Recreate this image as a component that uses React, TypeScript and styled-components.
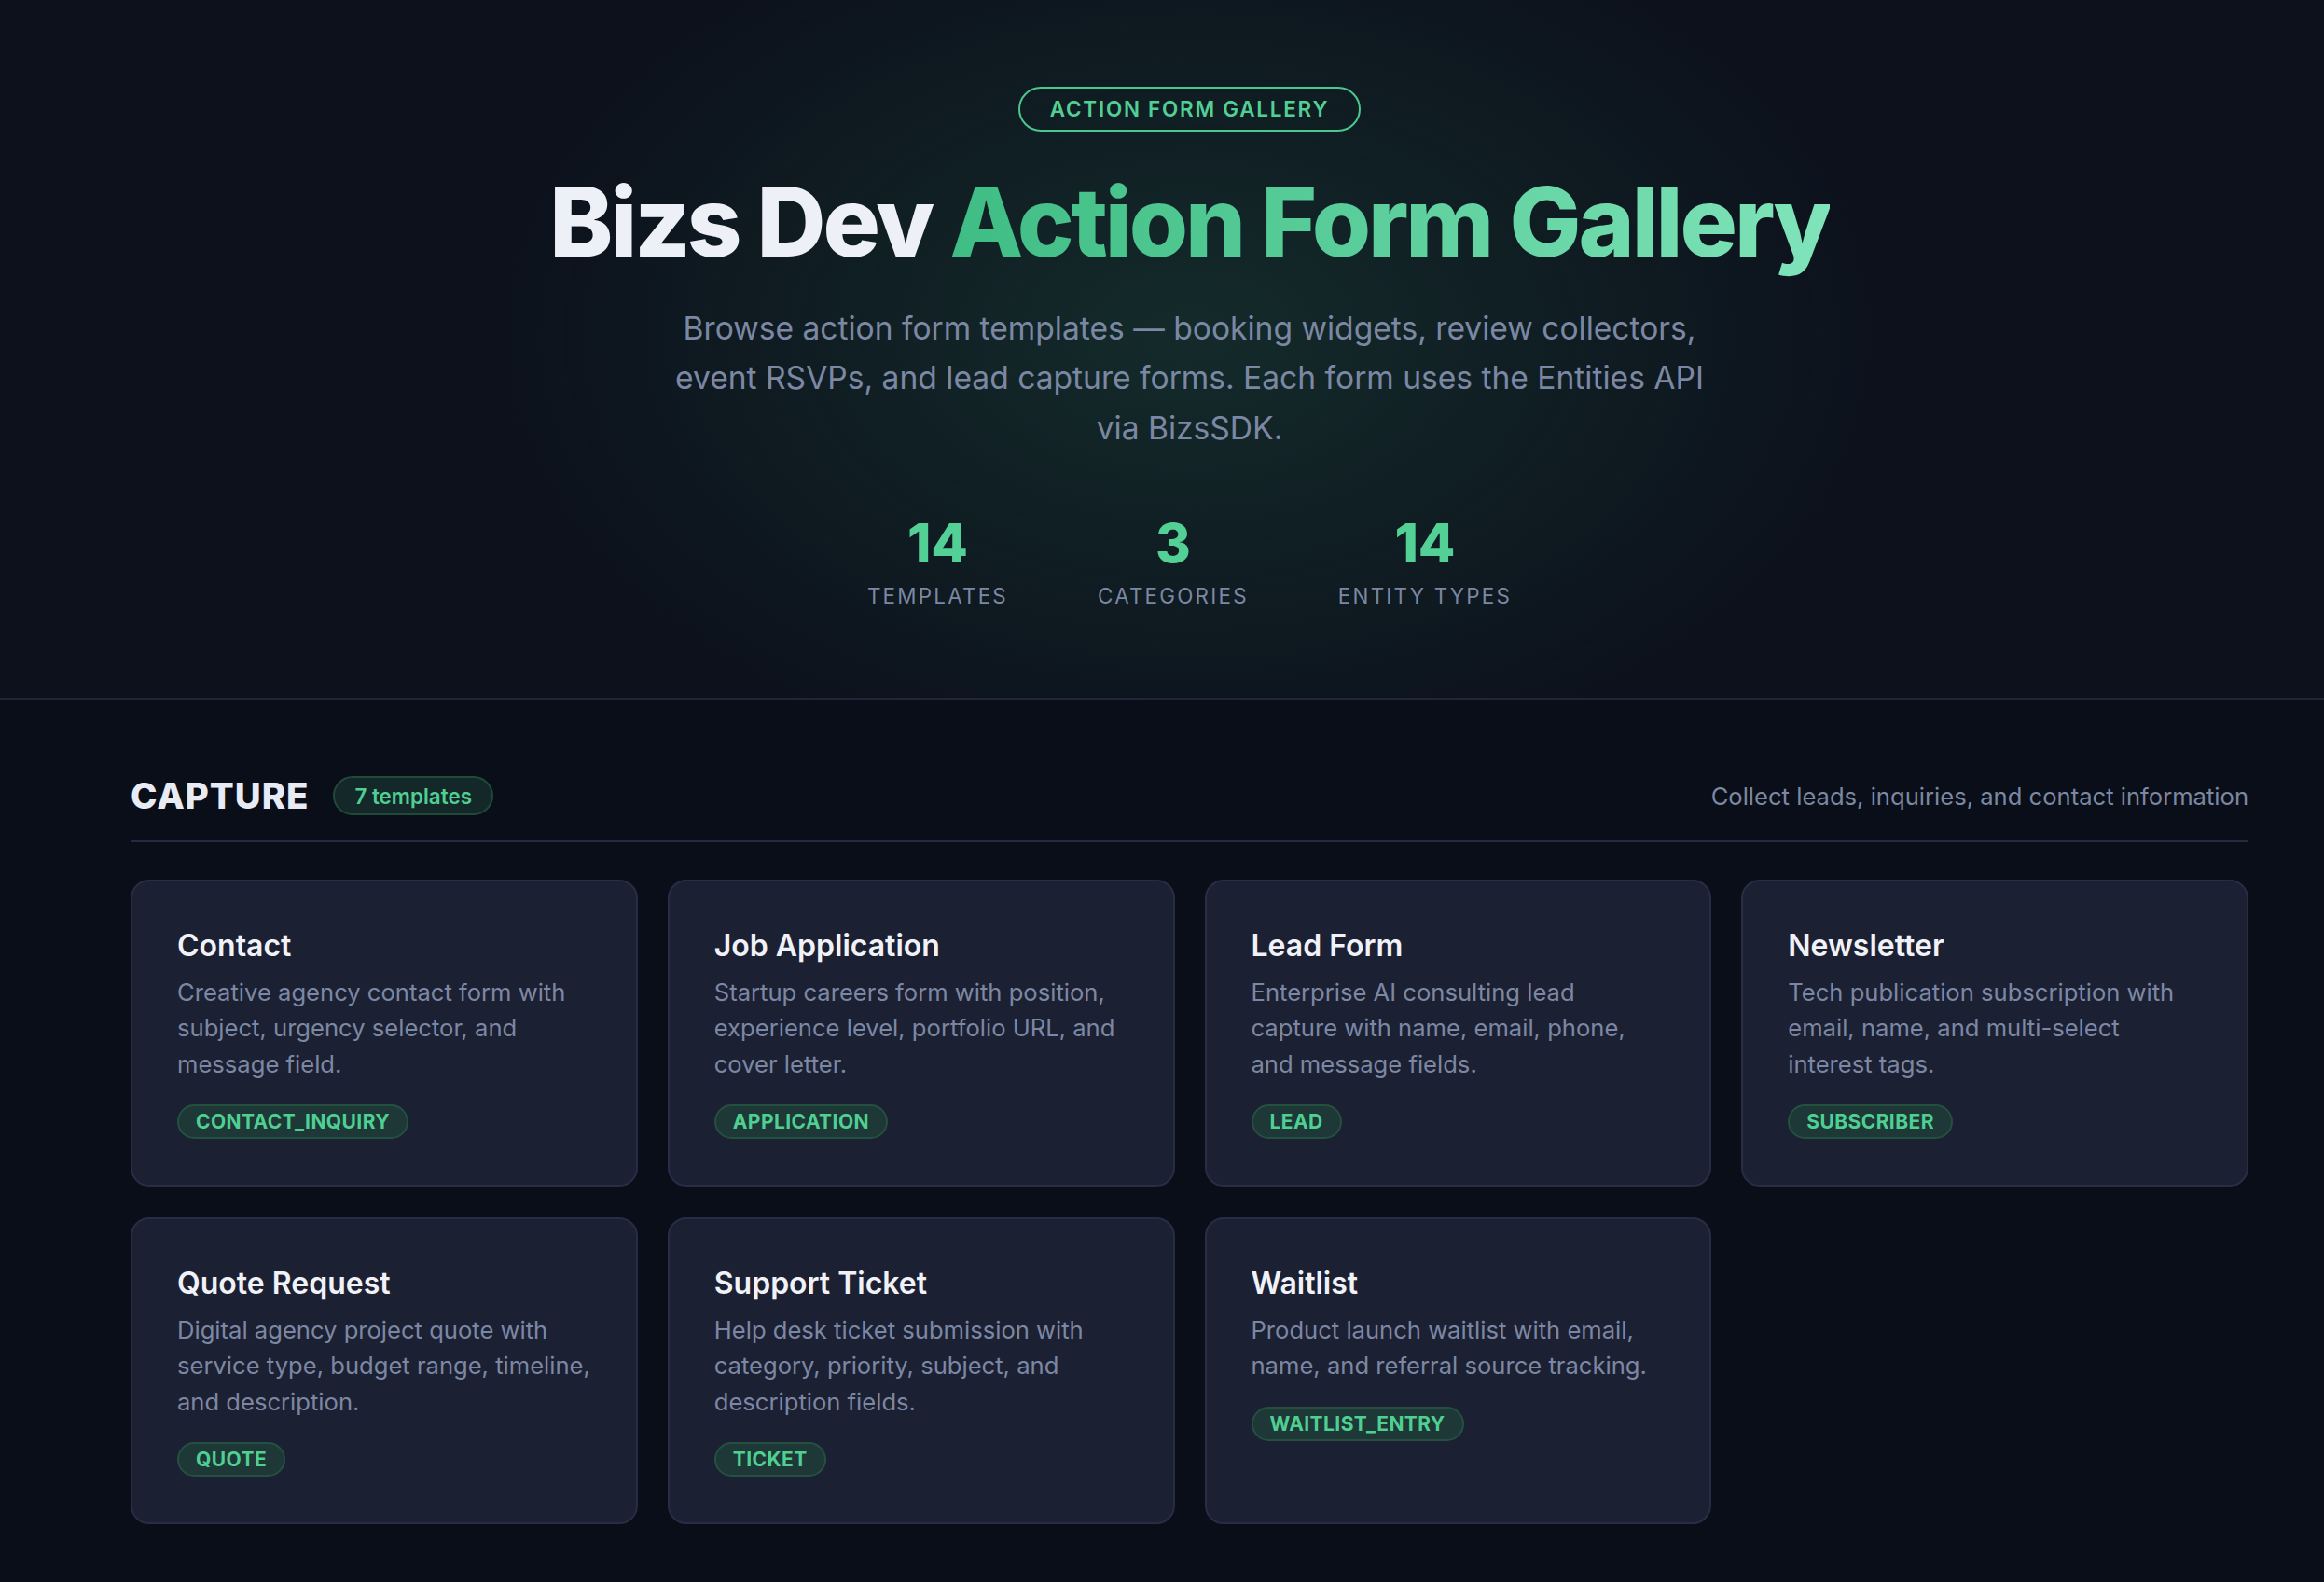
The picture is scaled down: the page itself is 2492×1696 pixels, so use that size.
import React from "react";
import styled, { createGlobalStyle } from "styled-components";

const GlobalStyle = createGlobalStyle`
  html, body {
    margin: 0;
    padding: 0;
    background: #0a0e18;
    overflow-x: hidden;
  }
  body {
    font-family: Inter, "Noto Sans", "Liberation Sans", sans-serif;
    -webkit-font-smoothing: antialiased;
  }
  * { box-sizing: border-box; }
`;

const Page = styled.div`
  width: 2551px;
  min-height: 1696px;
  background: #0a0e18;
`;

const Hero = styled.header`
  padding: 93px 140px 93px;
  text-align: center;
  border-bottom: 2px solid #20263a;
  background:
    radial-gradient(ellipse 1000px 640px at 50% 48%, rgba(40, 110, 80, 0.28), rgba(40, 110, 80, 0) 75%),
    #0c111c;
`;

const Badge = styled.div`
  display: inline-block;
  height: 48px;
  padding: 0 32px;
  border: 2px solid #4cc88f;
  border-radius: 999px;
  color: #52cf95;
  font-size: 22.4px;
  font-weight: 600;
  letter-spacing: 0.08em;
  line-height: 44px;
`;

const Title = styled.h1`
  margin: 41px 0 0;
  font-size: 102.4px;
  font-weight: 800;
  line-height: 1.1;
  letter-spacing: -0.03em;
  color: #eef0f8;
`;

const Accent = styled.span`
  background: linear-gradient(90deg, #3fbd84 0%, #5ccf9c 50%, #80e4ba 100%);
  -webkit-background-clip: text;
  background-clip: text;
  color: transparent;
`;

const Subtitle = styled.p`
  max-width: 1136px;
  margin: 30px auto 0;
  font-size: 33.6px;
  line-height: 53.76px;
  color: #7c88a3;
`;

const Stats = styled.div`
  display: flex;
  justify-content: center;
  gap: 96px;
  margin-top: 68px;
`;

const Stat = styled.div`
  display: flex;
  flex-direction: column;
  align-items: center;
`;

const StatValue = styled.div`
  font-size: 57.6px;
  font-weight: 800;
  line-height: 1;
  color: #52d095;
`;

const StatLabel = styled.div`
  margin-top: 10px;
  font-size: 22.4px;
  line-height: 33.6px;
  letter-spacing: 0.1em;
  color: #7c88a3;
`;

const Section = styled.section`
  padding: 80px 140px 64px;
`;

const SectionHeader = styled.div`
  display: flex;
  align-items: center;
  justify-content: space-between;
  padding-bottom: 25px;
  border-bottom: 2px solid #242a40;
  margin-bottom: 40px;
`;

const HeaderLeft = styled.div`
  display: flex;
  align-items: center;
  gap: 26px;
`;

const CategoryTitle = styled.h2`
  margin: 0;
  font-size: 38.4px;
  font-weight: 800;
  letter-spacing: 0.025em;
  line-height: 1.2;
  color: #e8eaf4;
`;

const CountPill = styled.span`
  display: inline-flex;
  align-items: center;
  height: 42px;
  padding: 0 21px;
  border: 2px solid #1f4a3a;
  border-radius: 999px;
  background: #14282a;
  color: #4fcf92;
  font-size: 22.4px;
  font-weight: 600;
`;

const CategoryDesc = styled.p`
  margin: 0;
  font-size: 25.6px;
  color: #7c88a3;
`;

const Grid = styled.div`
  display: grid;
  grid-template-columns: repeat(4, 1fr);
  gap: 33px 32px;
`;

const Card = styled.article`
  background: #1c2033;
  border: 2px solid #272d45;
  border-radius: 20px;
  padding: 48px;
  min-height: 329px;
`;

const CardTitle = styled.h3`
  margin: 0 0 10px;
  font-size: 32px;
  font-weight: 600;
  line-height: 1.3;
  color: #f0f2f8;
`;

const CardDesc = styled.p`
  margin: 0 0 24px;
  font-size: 25.6px;
  line-height: 38.4px;
  color: #7c88a3;
`;

const Tag = styled.span`
  display: inline-flex;
  align-items: center;
  height: 37px;
  padding: 0 18px;
  border: 2px solid #24503f;
  border-radius: 999px;
  background: #1d3837;
  color: #4fcf92;
  font-size: 21px;
  font-weight: 700;
  letter-spacing: 0.02em;
`;

const templates = [
  { title: "Contact", desc: "Creative agency contact form with subject, urgency selector, and message field.", tag: "CONTACT_INQUIRY" },
  { title: "Job Application", desc: "Startup careers form with position, experience level, portfolio URL, and cover letter.", tag: "APPLICATION" },
  { title: "Lead Form", desc: "Enterprise AI consulting lead capture with name, email, phone, and message fields.", tag: "LEAD" },
  { title: "Newsletter", desc: "Tech publication subscription with email, name, and multi-select interest tags.", tag: "SUBSCRIBER" },
  { title: "Quote Request", desc: "Digital agency project quote with service type, budget range, timeline, and description.", tag: "QUOTE" },
  { title: "Support Ticket", desc: "Help desk ticket submission with category, priority, subject, and description fields.", tag: "TICKET" },
  { title: "Waitlist", desc: "Product launch waitlist with email, name, and referral source tracking.", tag: "WAITLIST_ENTRY" },
];

const stats = [
  { value: "14", label: "TEMPLATES" },
  { value: "3", label: "CATEGORIES" },
  { value: "14", label: "ENTITY TYPES" },
];

export default function App() {
  return (
    <Page>
      <GlobalStyle />
      <Hero>
        <Badge>ACTION FORM GALLERY</Badge>
        <Title>
          Bizs Dev <Accent>Action Form Gallery</Accent>
        </Title>
        <Subtitle>
          Browse action form templates — booking widgets, review collectors, event RSVPs, and lead capture forms. Each form uses the Entities API via BizsSDK.
        </Subtitle>
        <Stats>
          {stats.map((s) => (
            <Stat key={s.label}>
              <StatValue>{s.value}</StatValue>
              <StatLabel>{s.label}</StatLabel>
            </Stat>
          ))}
        </Stats>
      </Hero>
      <Section>
        <SectionHeader>
          <HeaderLeft>
            <CategoryTitle>CAPTURE</CategoryTitle>
            <CountPill>7 templates</CountPill>
          </HeaderLeft>
          <CategoryDesc>Collect leads, inquiries, and contact information</CategoryDesc>
        </SectionHeader>
        <Grid>
          {templates.map((t) => (
            <Card key={t.title}>
              <CardTitle>{t.title}</CardTitle>
              <CardDesc>{t.desc}</CardDesc>
              <Tag>{t.tag}</Tag>
            </Card>
          ))}
        </Grid>
      </Section>
    </Page>
  );
}
